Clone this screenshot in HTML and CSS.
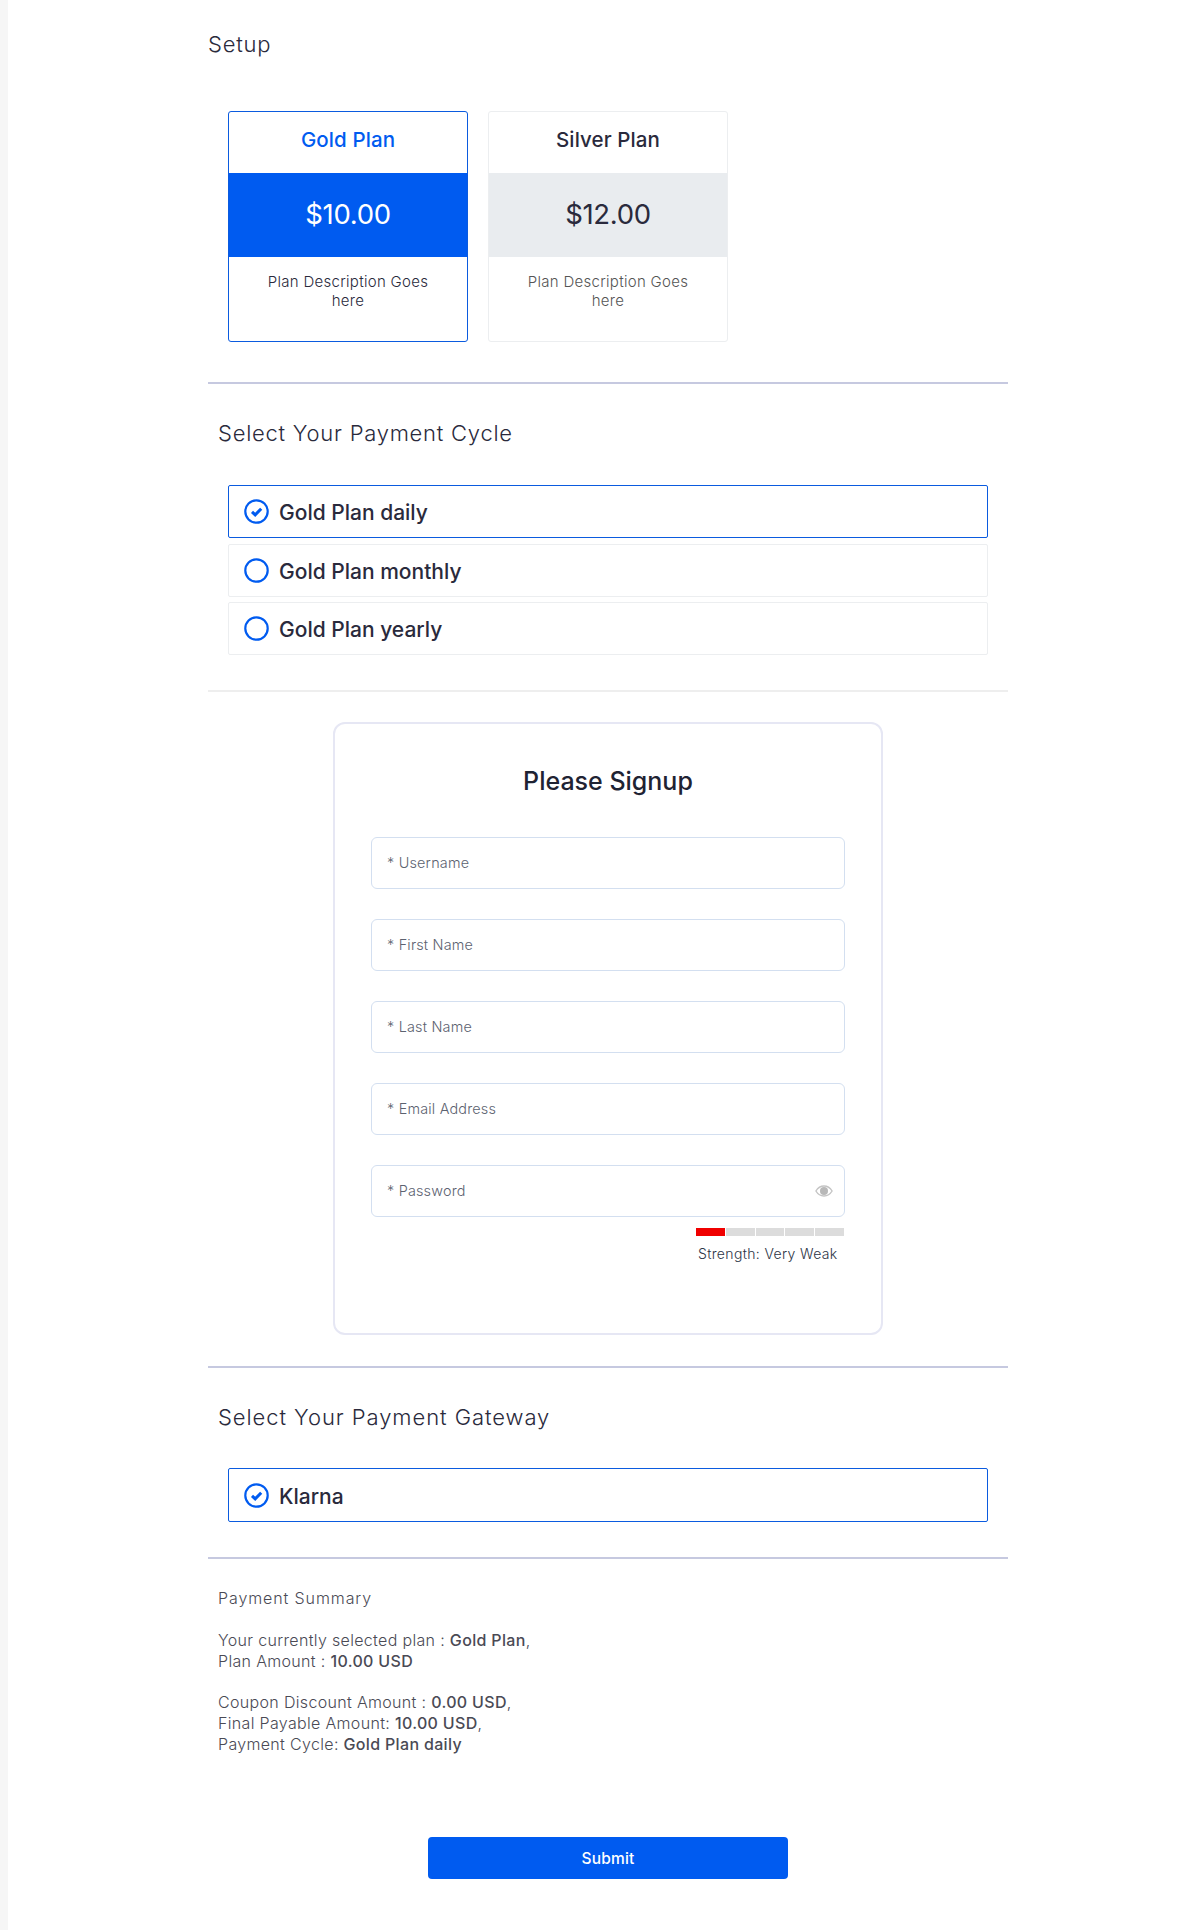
FILE: index.html
```html
<!DOCTYPE html>
<html lang="en">
<head>
<meta charset="utf-8">
<title>Setup</title>
<link rel="stylesheet" href="styles.css">
</head>
<body>
<main class="container">
  <h1 class="page-title">Setup</h1>
  <section class="plans">
    <article class="plan plan-active">
      <h2 class="plan-name">Gold Plan</h2>
      <div class="plan-price">$10.00</div>
      <p class="plan-desc">Plan Description Goes here</p>
    </article>
    <article class="plan">
      <h2 class="plan-name">Silver Plan</h2>
      <div class="plan-price">$12.00</div>
      <p class="plan-desc">Plan Description Goes here</p>
    </article>
  </section>
  <hr class="rule rule-plans">
  <h2 class="section-title">Select Your Payment Cycle</h2>
  <div class="options">
    <div class="option option-active">
      <svg class="radio" viewBox="0 0 25 25"><circle cx="12.5" cy="12.5" r="11.2"/><path class="tick" d="M8 12.800l3.200 3.100 6-6.200"/></svg>
      <span>Gold Plan daily</span>
    </div>
    <div class="option">
      <svg class="radio" viewBox="0 0 25 25"><circle cx="12.5" cy="12.5" r="11.2"/></svg>
      <span>Gold Plan monthly</span>
    </div>
    <div class="option">
      <svg class="radio" viewBox="0 0 25 25"><circle cx="12.5" cy="12.5" r="11.2"/></svg>
      <span>Gold Plan yearly</span>
    </div>
  </div>
  <hr class="rule rule-light rule-cycle">
  <section class="signup">
    <h2 class="signup-title">Please Signup</h2>
    <form class="signup-form">
      <input class="field" type="text" placeholder="* Username">
      <input class="field" type="text" placeholder="* First Name">
      <input class="field" type="text" placeholder="* Last Name">
      <input class="field" type="text" placeholder="* Email Address">
      <div class="password">
        <input class="field" type="password" placeholder="* Password">
        <svg class="eye" viewBox="0 0 18 12"><path class="eye-outline" d="M.9 6C2.900 2.700 5.700 1 9 1s6.100 1.700 8.100 5c-2 3.300-4.800 5-8.100 5S2.900 9.300.9 6z"/><circle class="eye-pupil" cx="9" cy="6" r="4"/></svg>
      </div>
      <div class="strength">
        <div class="meter"><i class="seg seg-on"></i><i class="seg"></i><i class="seg"></i><i class="seg"></i><i class="seg"></i></div>
        <p class="strength-label">Strength: Very Weak</p>
      </div>
    </form>
  </section>
  <hr class="rule rule-signup">
  <h2 class="section-title section-title-gateway">Select Your Payment Gateway</h2>
  <div class="options">
    <div class="option option-active option-gateway">
      <svg class="radio" viewBox="0 0 25 25"><circle cx="12.5" cy="12.5" r="11.2"/><path class="tick" d="M8 12.800l3.200 3.100 6-6.200"/></svg>
      <span>Klarna</span>
    </div>
  </div>
  <hr class="rule rule-gateway">
  <section class="summary">
    <p class="summary-title">Payment Summary</p>
    <p class="summary-block">Your currently selected plan : <b>Gold Plan</b>,<br>Plan Amount : <b>10.00 USD</b></p>
    <p class="summary-block">Coupon Discount Amount : <b>0.00 USD</b>,<br>Final Payable Amount: <b>10.00 USD</b>,<br>Payment Cycle: <b>Gold Plan daily</b></p>
  </section>
  <div class="actions"><button class="submit" type="button">Submit</button></div>
</main>
</body>
</html>
```
FILE: styles.css
```css
* { box-sizing: border-box; }
html, body { margin: 0; padding: 0; }
body {
  background: #fff;
  border-left: 8px solid #f6f6f6;
  min-height: 1930px;
  font-family: Inter, "Noto Sans", sans-serif;
  color: #2a2a3c;
}
.container {
  width: 800px;
  margin-left: 200px;
  padding-top: 29px;
}
.page-title {
  margin: 0 0 52px;
  font-size: 22px;
  line-height: 30px;
  font-weight: 300;
  letter-spacing: 0.75px;
  color: #2a2a3c;
}
.plans {
  display: flex;
  gap: 20px;
  padding-left: 20px;
}
.plan {
  width: 240px;
  height: 231px;
  border: 1px solid #eceef0;
  border-radius: 3px;
  overflow: hidden;
  text-align: center;
}
.plan-active { border-color: #0b5bdf; }
.plan-name {
  margin: 0;
  height: 61px;
  font-size: 20.5px;
  line-height: 56px;
  font-weight: 500;
  letter-spacing: 0.1px;
  color: #2a2a3c;
}
.plan-active .plan-name { color: #005bf0; }
.plan-price {
  height: 84px;
  background: #e9ecef;
  font-size: 27.5px;
  line-height: 82px;
  font-weight: 400;
  letter-spacing: -0.3px;
  color: #2a2a3c;
}
.plan-active .plan-price { background: #005bf0; color: #fff; }
.plan-desc {
  margin: 0 auto;
  width: 180px;
  padding-top: 15px;
  font-size: 15px;
  line-height: 19px;
  font-weight: 300;
  letter-spacing: 0.3px;
  color: #555;
}
.plan-active .plan-desc { color: #2a2a3c; }
.rule {
  margin: 0;
  height: 2px;
  border: 0;
  background: #c6c9e0;
}
.rule-light { background: #eeeeee; }
.rule-plans { margin-top: 40px; }
.rule-cycle { margin-top: 35px; }
.rule-signup { margin-top: 31px; }
.rule-gateway { margin-top: 35px; }
.section-title {
  margin: 34px 0 37px 10px;
  font-size: 22px;
  line-height: 30px;
  font-weight: 300;
  letter-spacing: 0.75px;
  color: #2a2a3c;
}
.section-title-gateway { margin-bottom: 36px; letter-spacing: 0.93px; }
.options {
  display: flex;
  flex-direction: column;
  gap: 5.5px;
  margin-left: 20px;
  width: 760px;
}
.option {
  display: flex;
  align-items: center;
  gap: 10px;
  height: 53px;
  padding-left: 15px;
  border: 1px solid #eceef0;
  border-radius: 2px;
  font-size: 21px;
  font-weight: 500;
  color: #2a2a3c;
}
.option span { padding-top: 2px; }
.option-active { border-color: #0b5bdf; }
.option-gateway { height: 54px; }
.radio {
  width: 25px;
  height: 25px;
  flex: none;
}
.radio circle { fill: none; stroke: #005bf0; stroke-width: 2.2; }
.radio .tick { fill: none; stroke: #005bf0; stroke-width: 3; }
.signup {
  width: 550px;
  height: 613px;
  margin: 30px 0 0 125px;
  padding: 0 36px;
  border: 2px solid #e6e7f4;
  border-radius: 12px;
}
.signup-title {
  margin: 39px 0 38px;
  font-size: 25px;
  line-height: 36px;
  font-weight: 500;
  text-align: center;
  color: #1f2333;
}
.signup-form {
  display: flex;
  flex-direction: column;
  gap: 30px;
}
.field {
  display: block;
  width: 100%;
  height: 52px;
  padding: 0 15px 1px;
  border: 1px solid #d3dff0;
  border-radius: 6px;
  background: #fff;
  font-family: inherit;
  font-size: 14.4px;
  outline: none;
}
.field::placeholder { color: #5c6270; opacity: 1; font-weight: 300; letter-spacing: 0.2px; }
.password { position: relative; }
.eye {
  position: absolute;
  top: 20px;
  right: 12px;
  width: 18px;
  height: 12px;
}
.eye-outline { fill: #fff; stroke: #c4c4c4; stroke-width: 1.4; }
.eye-pupil { fill: #b8b8b8; }
.strength {
  align-self: flex-end;
  width: 148px;
  margin: -19px 1px 0 0;
}
.meter {
  display: flex;
  gap: 1px;
  height: 8px;
}
.seg {
  flex: 1;
  background: #dcdcdc;
}
.seg-on { background: #f00000; }
.strength-label {
  margin: 8px 0 0;
  padding-left: 2px;
  font-size: 14px;
  line-height: 20px;
  font-weight: 300;
  letter-spacing: 0.35px;
  white-space: nowrap;
  color: #2d3446;
}
.summary {
  margin: 29px 0 0 10px;
  font-size: 16px;
  line-height: 21px;
  font-weight: 300;
  letter-spacing: 0.33px;
  color: #4a4a55;
}
.summary p { margin: 0; }
.summary .summary-title { letter-spacing: 0.9px; }
.summary .summary-block { margin-top: 20.5px; }
.summary b { font-weight: 500; color: #4a4a55; }
.actions {
  display: flex;
  justify-content: center;
  margin-top: 82px;
}
.submit {
  width: 360px;
  height: 42px;
  border: 0;
  border-radius: 4px;
  background: #005bf0;
  color: #fff;
  font-family: inherit;
  font-size: 15.5px;
  font-weight: 500;
  letter-spacing: 0.2px;
}
```
